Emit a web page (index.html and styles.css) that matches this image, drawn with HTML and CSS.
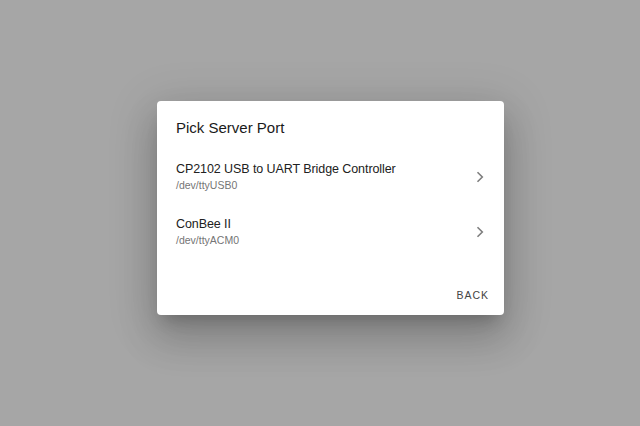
FILE: index.html
```html
<!DOCTYPE html>
<html>
<head>
<meta charset="utf-8">
<link rel="stylesheet" href="styles.css">
</head>
<body>
<div class="stage">
  <div class="dialog">
    <h2 class="title">Pick Server Port</h2>
    <ul class="list">
      <li class="item">
        <div class="texts">
          <span class="primary">CP2102 USB to UART Bridge Controller</span>
          <span class="secondary">/dev/ttyUSB0</span>
        </div>
        <svg class="chev" width="20" height="20" viewBox="0 0 20 20"><path d="M7.5 5.2 12.3 10 7.5 14.8" fill="none" stroke="#7d7d7d" stroke-width="1.6"/></svg>
      </li>
      <li class="item">
        <div class="texts">
          <span class="primary">ConBee II</span>
          <span class="secondary">/dev/ttyACM0</span>
        </div>
        <svg class="chev" width="20" height="20" viewBox="0 0 20 20"><path d="M7.5 5.2 12.3 10 7.5 14.8" fill="none" stroke="#7d7d7d" stroke-width="1.6"/></svg>
      </li>
    </ul>
    <div class="actions">
      <button class="btn">Back</button>
    </div>
  </div>
</div>
</body>
</html>
```

FILE: styles.css
```css
html, body {
  margin: 0;
  padding: 0;
  height: 100%;
}
body {
  background: #a6a6a6;
  font-family: "Liberation Sans", Arial, sans-serif;
}
.stage {
  padding: 101px 0 0 157px;
}
.dialog {
  width: 347px;
  height: 214px;
  box-sizing: border-box;
  background: #fff;
  border-radius: 4px;
  box-shadow: 0 11px 15px -7px rgba(0,0,0,0.2), 0 24px 38px 3px rgba(0,0,0,0.14), 0 9px 46px 8px rgba(0,0,0,0.12);
  display: flex;
  flex-direction: column;
}
.title {
  margin: 0;
  padding: 17px 19px 0 19px;
  height: 38px;
  box-sizing: border-box;
  font-size: 15px;
  font-weight: 400;
  color: #1a1a1a;
  line-height: 20px;
}
.list {
  list-style: none;
  margin: 0;
  padding: 10px 0 0 0;
}
.item {
  display: flex;
  align-items: center;
  height: 55px;
  padding: 0 14px 0 19px;
}
.texts {
  flex: 1;
  display: flex;
  flex-direction: column;
}
.primary {
  font-size: 12.5px;
  color: #212121;
  line-height: 16px;
  letter-spacing: -0.08px;
}
.secondary {
  font-size: 10.5px;
  color: #757575;
  line-height: 16px;
}
.chev {
  flex: none;
}
.actions {
  margin-top: auto;
  display: flex;
  justify-content: flex-end;
  padding: 0 7px 8px 0;
}
.btn {
  border: 0;
  background: transparent;
  font-family: inherit;
  text-transform: uppercase;
  font-size: 10.5px;
  letter-spacing: 1px;
  color: #444;
  padding: 6px 8px;
}
```
